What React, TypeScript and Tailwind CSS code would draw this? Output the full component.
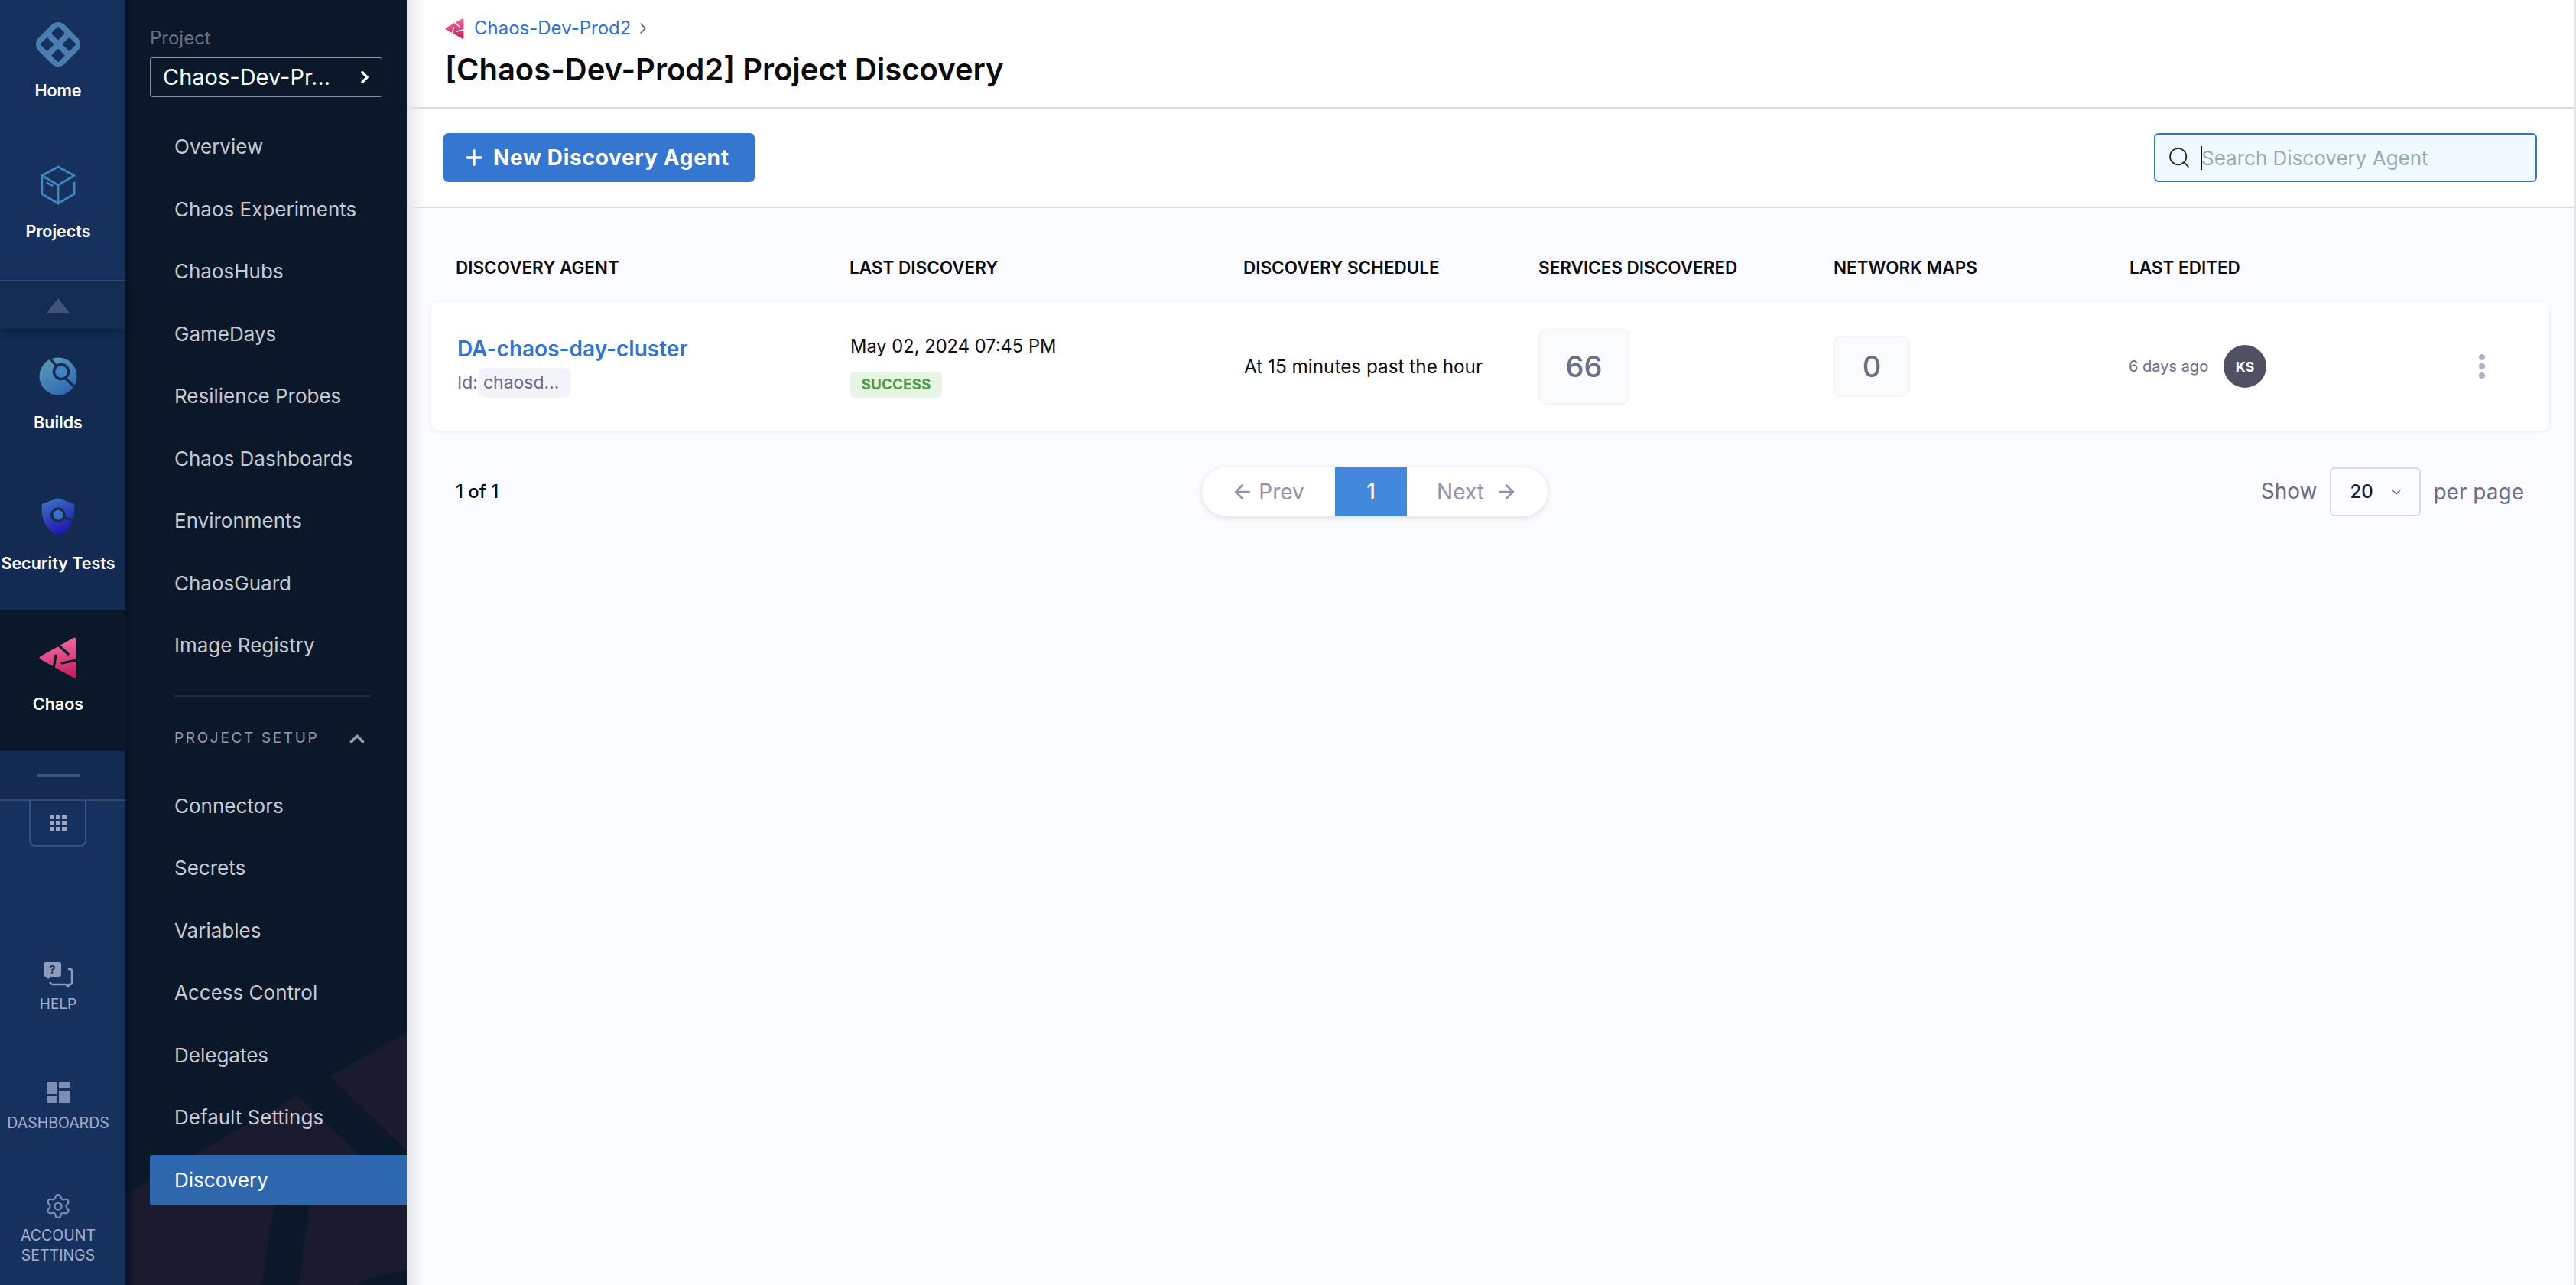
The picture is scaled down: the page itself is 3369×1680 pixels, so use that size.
import { ChevronRight, ChevronUp, ChevronDown, ArrowLeft, ArrowRight, Plus, Search, Settings } from 'lucide-react';

const NAV_TOP = ['Overview', 'Chaos Experiments', 'ChaosHubs', 'GameDays', 'Resilience Probes', 'Chaos Dashboards', 'Environments', 'ChaosGuard', 'Image Registry'];
const NAV_SETUP = ['Connectors', 'Secrets', 'Variables', 'Access Control', 'Delegates', 'Default Settings'];

function HomeIcon() {
  return (
    <svg width="60" height="60" viewBox="0 0 60 60">
      <rect x="6" y="6" width="48" height="48" rx="12" fill="#4b7db0" transform="rotate(45 30 30)" />
      <g fill="#16305f" transform="rotate(45 30 30)">
        <rect x="13.2" y="13.2" width="13" height="13" rx="2" />
        <rect x="33.8" y="13.2" width="13" height="13" rx="2" />
        <rect x="13.2" y="33.8" width="13" height="13" rx="2" />
        <rect x="33.8" y="33.8" width="13" height="13" rx="2" />
      </g>
    </svg>
  );
}

function CubeIcon() {
  return (
    <svg width="48" height="52" viewBox="0 0 50 54" fill="none" stroke="#3f86c2" strokeWidth="3" strokeLinejoin="round" strokeLinecap="round">
      <path d="M25 2 47 14 25 27 3 14Z" />
      <path d="M3 14v25l22 13 22-13V24" />
      <path d="M25 27v25" />
      <path d="M10 24l7 3.5" />
    </svg>
  );
}

function BuildsIcon() {
  return (
    <svg width="50" height="50" viewBox="0 0 50 50">
      <defs>
        <linearGradient id="buildsGrad" x1="0" y1="0" x2="0.6" y2="1">
          <stop offset="0" stopColor="#5f9fb5" />
          <stop offset="1" stopColor="#2f6bb8" />
        </linearGradient>
      </defs>
      <circle cx="25" cy="25" r="24.5" fill="url(#buildsGrad)" />
      <path d="M14 1 23 12M35 28 50 42" stroke="#142b52" strokeWidth="3.5" />
      <circle cx="29" cy="19" r="9.5" fill="#3f83c0" stroke="#142b52" strokeWidth="3.5" />
    </svg>
  );
}

function ShieldIcon() {
  return (
    <svg width="44" height="52" viewBox="0 0 46 52">
      <defs>
        <linearGradient id="shieldGrad" x1="0" y1="0" x2="0.4" y2="1">
          <stop offset="0" stopColor="#3f78c6" />
          <stop offset="1" stopColor="#2018ae" />
        </linearGradient>
      </defs>
      <path d="M23 0 45 8c1 16 0 32-22 44C1 40 0 24 1 8Z" fill="url(#shieldGrad)" />
      <circle cx="23" cy="23" r="8.5" fill="#3a6dc4" stroke="#142b52" strokeWidth="3.5" />
      <path d="M30 27l15 3" stroke="#142b52" strokeWidth="3.5" />
    </svg>
  );
}

function ChaosIcon({ size = 50, cut = '#0b1829' }: { size?: number; cut?: string }) {
  const id = `chaosGrad${size}`;
  return (
    <svg width={size} height={size * 1.08} viewBox="0 0 50 54">
      <defs>
        <linearGradient id={id} x1="0.4" y1="0" x2="0.6" y2="1">
          <stop offset="0" stopColor="#f06fa8" />
          <stop offset="1" stopColor="#c5205d" />
        </linearGradient>
      </defs>
      <path d="M45 1c2-1 4 0 4 3v46c0 3-2 4-4 3L2 29c-2-1-2-3 0-4Z" fill={`url(#${id})`} />
      <path d="M26 11l12 11M22 24l-3 17M30 34l19-4" stroke={cut} strokeWidth="3.2" fill="none" strokeLinecap="round" />
    </svg>
  );
}

function HelpIcon() {
  return (
    <svg width="38" height="36" viewBox="0 0 38 36">
      <path d="M3 0h17c2 0 3 1 3 3v13c0 2-1 3-3 3H9l-3 3-2-3H3c-2 0-3-1-3-3V3C0 1 1 0 3 0Z" fill="#8c9cbb" />
      <text x="11.5" y="14.5" fontSize="15" fontWeight="700" fontFamily="Inter" textAnchor="middle" fill="#17315f">?</text>
      <path d="M32 9h3c1 0 2 1 2 2v16c0 2-1 2-2 2h-2l-1 3-3-3H11l-3-3" fill="none" stroke="#8c9cbb" strokeWidth="2.4" strokeLinejoin="round" />
    </svg>
  );
}

function RailItem({ icon, label, pt, h, active }: { icon: React.ReactNode; label: string; pt: string; h: string; active?: boolean }) {
  return (
    <div className={`flex flex-col items-center pr-[12px] ${pt} ${h} ${active ? 'bg-[#0b1829]' : ''}`}>
      <div className="h-[60px] flex items-center justify-center">{icon}</div>
      <div className="mt-[18px] text-[21.5px] leading-[24px] font-semibold text-white whitespace-nowrap">{label}</div>
    </div>
  );
}

function Rail() {
  return (
    <div className="w-[164px] h-full shrink-0 flex flex-col bg-[#17315f]">
      <RailItem icon={<HomeIcon />} label="Home" pt="pt-[28px]" h="h-[184px]" />
      <RailItem icon={<CubeIcon />} label="Projects" pt="pt-[28px]" h="h-[182px]" />
      <div className="h-[64px] pr-[12px] bg-[#142b52] border-t-2 border-[#36486d] flex items-center justify-center shadow-[0_4px_8px_rgba(5,12,30,0.4)] z-10">
        <div className="w-0 h-0 border-l-[15px] border-r-[15px] border-b-[19px] border-l-transparent border-r-transparent border-b-[#3f5476]" />
      </div>
      <div className="bg-[#132b52]">
        <RailItem icon={<BuildsIcon />} label="Builds" pt="pt-[32px]" h="h-[183px]" />
        <RailItem icon={<ShieldIcon />} label="Security Tests" pt="pt-[33px]" h="h-[184px]" />
        <RailItem icon={<ChaosIcon />} label="Chaos" pt="pt-[33px]" h="h-[185px]" active />
        <div className="h-[65px] pr-[12px] border-b-2 border-[#36486d] flex items-center justify-center">
          <div className="w-[56px] h-[4px] bg-[#3f5476]" />
        </div>
      </div>
      <div className="w-[75px] h-[60px] ml-[38px] border-2 border-t-0 border-[#2c5590] rounded-b-[8px] bg-[#15305c] flex items-center justify-center">
        <div className="grid grid-cols-3 gap-[2px]">
          {Array.from({ length: 9 }).map((_, i) => (
            <div key={i} className="w-[6px] h-[6px] bg-[#9ba6c4]" />
          ))}
        </div>
      </div>
      <div className="mt-[151px] pr-[12px] flex flex-col items-center">
        <HelpIcon />
        <div className="mt-[8px] text-[19px] leading-[22px] text-[#a3afca]">HELP</div>
      </div>
      <div className="mt-[90px] pr-[12px] flex flex-col items-center">
        <div className="w-[30px] h-[28px] grid grid-cols-[13px_14px] grid-rows-[16px_9px] gap-[3px]">
          <div className="bg-[#7b8fb4]" />
          <div className="bg-[#7b8fb4] h-[9px]" />
          <div className="bg-[#7b8fb4] h-[9px]" />
          <div className="bg-[#7b8fb4] h-[16px] -mt-[7px]" />
        </div>
        <div className="mt-[15px] text-[19.5px] leading-[22px] text-[#a3afca] whitespace-nowrap">DASHBOARDS</div>
      </div>
      <div className="mt-[80px] pr-[12px] flex flex-col items-center">
        <Settings size={36} strokeWidth={1.5} className="text-[#7b8fb4]" />
        <div className="mt-[7px] text-[19.5px] leading-[26px] text-[#a3afca] text-center">ACCOUNT<br />SETTINGS</div>
      </div>
    </div>
  );
}

function NavLink({ label }: { label: string }) {
  return <div className="h-[81.5px] flex items-center text-[26px] text-[#c6cad3]">{label}</div>;
}

function Nav() {
  return (
    <div className="relative w-[368px] h-full shrink-0 bg-[#0b1829] overflow-hidden">
      {/* big faded logo behind the menu */}
      <svg className="absolute left-0 top-0" width="368" height="1680" viewBox="0 0 368 1680">
        <path d="M368 1350 268 1407 368 1505Z" fill="#1b1b30" />
        <path d="M0 1562 225 1432 368 1570V1660L316 1672C310 1674 306 1677 303 1680H0Z" fill="#1b1b30" />
        <path d="M192 1590C195 1554 241 1555 239 1590L227 1680H178Z" fill="#0b1829" />
      </svg>
      <div className="absolute left-0 top-0 bottom-0 w-[12px] bg-gradient-to-r from-[#071226] to-transparent" />
      <div className="relative flex flex-col">
        <div className="pl-[32px] pt-[36px] text-[24px] leading-[28px] text-[#6a6f85]">Project</div>
        <div className="ml-[32px] mt-[11px] w-[304px] h-[52px] border border-[#8a8fa3] rounded-[3px] flex items-center justify-between pl-[16px] pr-[9px] text-[29px] text-white">
          <span>Chaos-Dev-Pr...</span>
          <ChevronRight size={26} strokeWidth={3} />
        </div>
        <div className="pl-[64px] pt-[24px]">
          {NAV_TOP.map(item => <NavLink key={item} label={item} />)}
        </div>
        <div className="ml-[64px] mr-[48px] mt-[24px] h-[2px] bg-[#212c3e]" />
        <div className="pl-[64px] pr-[50px] h-[110px] flex items-center justify-between text-[19px] tracking-[0.14em] text-[#979cab]">
          <span>PROJECT SETUP</span>
          <ChevronUp size={30} strokeWidth={3} />
        </div>
        <div className="pl-[64px] -mt-[8px]">
          {NAV_SETUP.map(item => <NavLink key={item} label={item} />)}
        </div>
        <div className="ml-[32px] pl-[32px] h-[66px] mt-[8px] rounded-l-[4px] bg-[#2f6bb5]/95">
          <div className="h-full flex items-center text-[26px] text-white">Discovery</div>
        </div>
      </div>
    </div>
  );
}

const COLUMNS = [
  { title: 'DISCOVERY AGENT', w: 'w-[515px]' },
  { title: 'LAST DISCOVERY', w: 'w-[515px]' },
  { title: 'DISCOVERY SCHEDULE', w: 'w-[386px]' },
  { title: 'SERVICES DISCOVERED', w: 'w-[386px]' },
  { title: 'NETWORK MAPS', w: 'w-[387px]' },
  { title: 'LAST EDITED', w: 'w-[300px]' },
];

function Main() {
  return (
    <div className="relative flex-1 h-full flex flex-col bg-[#fbfcff] border-r-[3px] border-[#e4e4ec]">
      <div className="absolute left-0 top-0 bottom-0 w-[24px] bg-gradient-to-r from-[#e6e7ee] to-transparent" />
      <div className="h-[142px] bg-white border-b-2 border-[#d9dae5] pl-[50px] pt-[21px]">
        <div className="flex items-center h-[32px]">
          <ChaosIcon size={25} cut="#ffffff" />
          <span className="ml-[13px] text-[24px] text-[#3273cf]">Chaos-Dev-Prod2</span>
          <ChevronRight size={24} strokeWidth={1.5} className="ml-[4px] text-[#4f5162]" />
        </div>
        <div className="mt-[15px] text-[40px] leading-[46px] font-semibold text-[#0b0b0d]">[Chaos-Dev-Prod2] Project Discovery</div>
      </div>
      <div className="h-[130px] bg-white border-b-2 border-[#d9dae5] pl-[48px] pr-[48px] flex items-center justify-between">
        <div className="w-[407px] h-[64px] rounded-[6px] bg-[#3576d0] flex items-center pl-[24px] text-white text-[28px] font-bold tracking-[0.025em]">
          <Plus size={32} strokeWidth={2.5} />
          <span className="ml-[9px]">New Discovery Agent</span>
        </div>
        <div className="w-[501px] h-[64px] rounded-[6px] border-2 border-[#3272cf] bg-[#f0f9fe] flex items-center pl-[15px]">
          <Search size={32} strokeWidth={1.3} className="text-[#22222a]" />
          <div className="ml-[12px] w-[2px] h-[31px] bg-[#0b0b0d]" />
          <span className="text-[26px] text-[#9aa8b8] -ml-[1px]">Search Discovery Agent</span>
        </div>
      </div>
      <div className="flex-1 pl-[32px] pr-[32px]">
        <div className="h-[123px] pt-[32px] flex items-center pl-[32px]">
          {COLUMNS.map(col => (
            <div key={col.title} className={`${col.w} shrink-0 text-[22.5px] font-semibold text-[#0b0b0d] whitespace-nowrap`}>{col.title}</div>
          ))}
        </div>
        <div className="h-[168px] bg-white rounded-[8px] shadow-[0_1px_5px_rgba(40,41,61,0.1)] flex items-center pl-[34px]">
          <div className="w-[514px] shrink-0">
            <div className="text-[28px] leading-[36px] font-semibold text-[#3273cf]">DA-chaos-day-cluster</div>
            <div className="mt-[7px] flex items-center text-[23px] text-[#6b6d85]">
              Id:
              <span className="ml-[1px] h-[39px] w-[120px] rounded-[8px] bg-[#f3f3fa] flex items-center pl-[6px]">chaosd...</span>
            </div>
          </div>
          <div className="w-[515px] shrink-0">
            <div className="text-[23.7px] leading-[30px] text-[#0b0b0d]">May 02, 2024 07:45 PM</div>
            <div className="mt-[18px] w-[120px] h-[34px] rounded-[6px] bg-[#e8f5e5] flex items-center justify-center text-[19px] font-bold text-[#4a9d43]">SUCCESS</div>
          </div>
          <div className="w-[385px] shrink-0 text-[24.3px] text-[#0b0b0d]">At 15 minutes past the hour</div>
          <div className="w-[386px] shrink-0">
            <div className="w-[119px] h-[99px] rounded-[10px] border-2 border-[#f3f3fa] bg-[#fafbfc] flex items-center justify-center text-[38px] font-medium text-[#6b6d85]">66</div>
          </div>
          <div className="w-[386px] shrink-0">
            <div className="w-[100px] h-[80px] rounded-[10px] border-2 border-[#f3f3fa] bg-[#fafbfc] flex items-center justify-center text-[38px] font-medium text-[#6b6d85]">0</div>
          </div>
          <div className="flex-1 flex items-center">
            <span className="text-[20px] text-[#6b6d85]">6 days ago</span>
            <div className="ml-[20px] w-[56px] h-[56px] rounded-full bg-[#4f5162] flex items-center justify-center text-[18px] font-bold text-white">KS</div>
          </div>
          <div className="w-[8px] mr-[84px] flex flex-col gap-[4px]">
            <div className="w-[8px] h-[8px] rounded-full bg-[#b0b1c4]" />
            <div className="w-[8px] h-[8px] rounded-full bg-[#b0b1c4]" />
            <div className="w-[8px] h-[8px] rounded-full bg-[#b0b1c4]" />
          </div>
        </div>
        <div className="mt-[48px] h-[64px] pl-[32px] flex items-center">
          <div className="w-[976px] shrink-0 text-[24px] font-medium text-[#0b0b0d]">1 of 1</div>
          <div className="w-[452px] h-[64px] shrink-0 rounded-full bg-white shadow-[0_2px_8px_rgba(40,41,61,0.14)] flex items-center overflow-hidden text-[28px] text-[#9293ab]">
            <div className="w-[174px] flex items-center justify-center gap-[6px] pr-[2px]">
              <ArrowLeft size={30} strokeWidth={2} />
              <span>Prev</span>
            </div>
            <div className="w-[94px] h-full bg-[#4289dc] text-white flex items-center justify-center font-medium">1</div>
            <div className="flex-1 flex items-center justify-center gap-[14px]">
              <span>Next</span>
              <ArrowRight size={30} strokeWidth={2} />
            </div>
          </div>
          <div className="flex-1 flex items-center justify-end pr-[33px] text-[28px] text-[#6b6d85]">
            <span className="-mt-[2px]">Show</span>
            <div className="ml-[17px] mr-[16px] w-[119px] h-[64px] rounded-[6px] border-2 border-[#d9dae5] flex items-center pl-[24px] text-[24px] font-medium text-[#1c1c28]">
              20
              <ChevronDown size={22} strokeWidth={1.5} className="ml-[19px] text-[#6b6d85]" />
            </div>
            <span>per page</span>
          </div>
        </div>
      </div>
    </div>
  );
}

export default function App() {
  return (
    <div className="w-[3369px] h-[1680px] flex overflow-hidden font-['Inter',sans-serif]">
      <Rail />
      <Nav />
      <Main />
    </div>
  );
}
